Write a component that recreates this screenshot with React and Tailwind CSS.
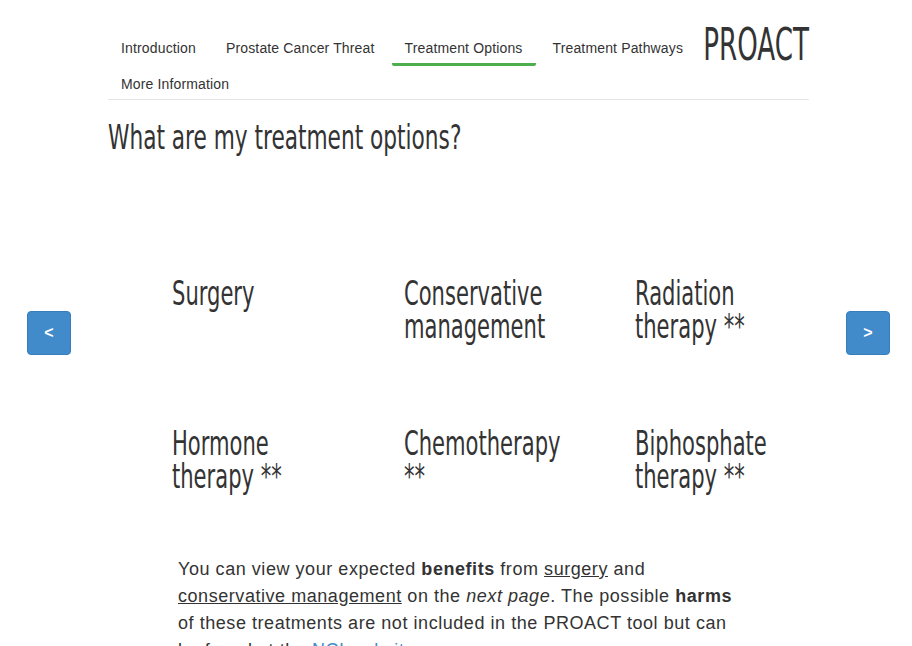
import React from "react";

const condensed = {
  fontFamily: '"DejaVu Sans Condensed", "DejaVu Sans", sans-serif',
};

const navItems = [
  { label: "Introduction" },
  { label: "Prostate Cancer Threat" },
  { label: "Treatment Options", active: true },
  { label: "Treatment Pathways" },
  { label: "More Information" },
];

const options = [
  ["Surgery"],
  ["Conservative", "management"],
  ["Radiation", "therapy **"],
  ["Hormone", "therapy **"],
  ["Chemotherapy", "**"],
  ["Biphosphate", "therapy **"],
];

const App = () => {
  return (
    <div className="min-h-screen bg-white text-[#333]" style={{ fontFamily: '"Liberation Sans", Arial, sans-serif' }}>
      {/* Header / nav */}
      <div className="ml-[108px] w-[701px] pt-[30px] border-b border-[#e5e5e5] flex">
        <ul className="flex flex-wrap flex-1 min-w-0 gap-x-[4px] -mb-[3px]">
          {navItems.map((item) => (
            <li
              key={item.label}
              className={`px-[13px] pt-[8px] pb-[5px] leading-[20px] text-[14px] tracking-[0.15px] border-b-[3px] rounded-[2px] ${
                item.active ? "border-[#4cae4c]" : "border-transparent"
              }`}
            >
              {item.label}
            </li>
          ))}
        </ul>
        <div className="w-[106px] shrink-0 flex justify-end">
          <span
            className="block whitespace-nowrap text-[44px] leading-[40px] h-[40px] mt-[-5px] text-[#333] origin-right scale-x-[0.66]"
            style={condensed}
          >
            PROACT
          </span>
        </div>
      </div>

      <h1
        className="ml-[108px] mt-[21px] text-[33px] leading-[33px] text-[#333] whitespace-nowrap origin-left scale-x-[0.73]"
        style={condensed}
      >
        What are my treatment options?
      </h1>

      {/* Carousel */}
      <div className="flex items-start mt-[123px]">
        <button className="ml-[27px] mt-[34px] w-[44px] h-[44px] rounded-[4px] bg-[#428bca] border border-[#357ebd] text-white text-[16px] font-bold shrink-0">
          &lt;
        </button>
        <div className="ml-[101px] grid grid-cols-[232px_231px_211px] gap-y-[84px]">
          {options.map((lines, i) => (
            <div
              key={i}
              className="min-h-[66px] text-[33px] leading-[33px] text-[#333] whitespace-nowrap origin-left scale-x-[0.71]"
              style={condensed}
            >
              {lines.map((l, j) => (
                <div key={j}>{l}</div>
              ))}
            </div>
          ))}
        </div>
        <button className="mt-[34px] w-[44px] h-[44px] rounded-[4px] bg-[#428bca] border border-[#357ebd] text-white text-[16px] font-bold shrink-0">
          &gt;
        </button>
      </div>

      <p className="ml-[178px] mt-[63px] w-[562px] text-[18px] leading-[27px] tracking-[0.55px] text-[#333]">
        You can view your expected <b>benefits</b> from <u>surgery</u> and{" "}
        <u>conservative management</u> on the <i>next page</i>. The possible <b>harms</b> of these
        treatments are not included in the PROACT tool but can be found at the{" "}
        <a className="text-[#428bca]">NCI website</a>.
      </p>
    </div>
  );
};

export default App;
